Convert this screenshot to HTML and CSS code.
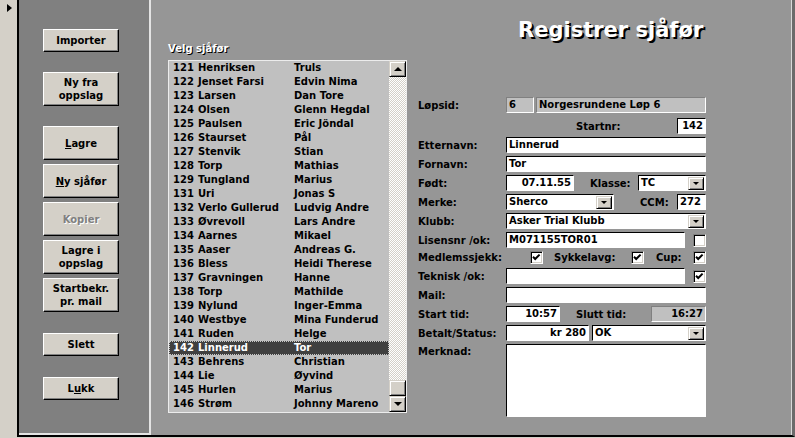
FILE: index.html
```html
<!DOCTYPE html>
<html lang="no">

<head>
  <meta charset="UTF-8" />
  <meta name="viewport" content="width=device-width, initial-scale=1.0" />
  <title>Registrer sjåfør</title>
  <link rel="stylesheet" href="styles.css">
</head>

<body>
  <div class="window">
    <!-- postvelger til venstre -->
    <div class="selector"><span class="current"></span></div>

    <div class="form">
      <div class="panel">
        <button class="btn">Importer</button>
        <button class="btn tall spaced">Ny fra<br>oppslag</button>
        <button class="btn tall spaced"><u>L</u>agre</button>
        <button class="btn tall"><u>N</u>y sjåfør</button>
        <button class="btn tall" disabled>Kopier</button>
        <button class="btn tall">Lagre i<br>oppslag</button>
        <button class="btn tall">Startbekr.<br>pr. mail</button>
        <button class="btn apart">Slett</button>
        <button class="btn apart">L<u>u</u>kk</button>
      </div>

      <div class="detail">
        <div class="picker">
          <div class="picker-label">Velg sjåfør</div>
          <div class="listbox">
            <ul class="rows" id="rows"></ul>
            <div class="vscroll">
              <span class="sb-btn"><i class="arrow up"></i></span>
              <span class="sb-track"></span>
              <span class="sb-btn"></span>
              <span class="sb-btn"><i class="arrow down"></i></span>
            </div>
          </div>
        </div>

        <div class="record">
          <h1 class="title">Registrer sjåfør</h1>

          <div class="row first">
            <span class="lbl">Løpsid:</span>
            <span class="field grey race-id">6</span>
            <span class="field grey race-name">Norgesrundene Løp 6</span>
          </div>
          <div class="row start">
            <span class="lbl startnr-lbl">Startnr:</span>
            <span class="field num small">142</span>
          </div>
          <div class="row">
            <span class="lbl">Etternavn:</span>
            <span class="field wide">Linnerud</span>
          </div>
          <div class="row">
            <span class="lbl">Fornavn:</span>
            <span class="field wide">Tor</span>
          </div>
          <div class="row">
            <span class="lbl">Født:</span>
            <span class="field num born">07.11.55</span>
            <span class="lbl class-lbl">Klasse:</span>
            <span class="field combo class-box">TC<i class="drop"></i></span>
          </div>
          <div class="row">
            <span class="lbl">Merke:</span>
            <span class="field combo brand">Sherco<i class="drop"></i></span>
            <span class="lbl ccm-lbl">CCM:</span>
            <span class="field small">272</span>
          </div>
          <div class="row">
            <span class="lbl">Klubb:</span>
            <span class="field combo wide">Asker Trial Klubb<i class="drop"></i></span>
          </div>
          <div class="row">
            <span class="lbl">Lisensnr /ok:</span>
            <span class="field licence">M071155TOR01</span>
            <span class="check end"></span>
          </div>
          <div class="row checks">
            <span class="lbl member-lbl">Medlemssjekk:</span>
            <span class="check on"></span>
            <span class="lbl fee-lbl">Sykkelavg:</span>
            <span class="check on"></span>
            <span class="lbl cup-lbl">Cup:</span>
            <span class="check on"></span>
          </div>
          <div class="row">
            <span class="lbl">Teknisk /ok:</span>
            <span class="field licence"></span>
            <span class="check end on"></span>
          </div>
          <div class="row">
            <span class="lbl">Mail:</span>
            <span class="field wide"></span>
          </div>
          <div class="row">
            <span class="lbl">Start tid:</span>
            <span class="field num time">10:57</span>
            <span class="lbl end-lbl">Slutt tid:</span>
            <span class="field grey num end-time">16:27</span>
          </div>
          <div class="row">
            <span class="lbl">Betalt/Status:</span>
            <span class="field num paid">kr 280</span>
            <span class="field combo status">OK<i class="drop"></i></span>
          </div>
          <div class="row memo-row">
            <span class="lbl">Merknad:</span>
            <span class="field memo"></span>
          </div>
        </div>
      </div>
    </div>
  </div>

  <script>
    const drivers = [
      [121, 'Henriksen', 'Truls'],
      [122, 'Jenset Farsi', 'Edvin Nima'],
      [123, 'Larsen', 'Dan Tore'],
      [124, 'Olsen', 'Glenn Hegdal'],
      [125, 'Paulsen', 'Eric Jöndal'],
      [126, 'Staurset', 'Pål'],
      [127, 'Stenvik', 'Stian'],
      [128, 'Torp', 'Mathias'],
      [129, 'Tungland', 'Marius'],
      [131, 'Uri', 'Jonas S'],
      [132, 'Verlo Gullerud', 'Ludvig Andre'],
      [133, 'Øvrevoll', 'Lars Andre'],
      [134, 'Aarnes', 'Mikael'],
      [135, 'Aaser', 'Andreas G.'],
      [136, 'Bless', 'Heidi Therese'],
      [137, 'Gravningen', 'Hanne'],
      [138, 'Torp', 'Mathilde'],
      [139, 'Nylund', 'Inger-Emma'],
      [140, 'Westbye', 'Mina Funderud'],
      [141, 'Ruden', 'Helge'],
      [142, 'Linnerud', 'Tor'],
      [143, 'Behrens', 'Christian'],
      [144, 'Lie', 'Øyvind'],
      [145, 'Hurlen', 'Marius'],
      [146, 'Strøm', 'Johnny Mareno']
    ];

    const $rows = document.getElementById('rows');
    const $fragment = document.createDocumentFragment();

    for (const [nr, last, first] of drivers) {
      const $li = document.createElement('li');
      $li.className = nr === 142 ? 'item selected' : 'item';
      $li.innerHTML = `<span class="nr">${nr}</span><span class="last">${last}</span><span>${first}</span>`;
      $fragment.appendChild($li);
    }
    $rows.appendChild($fragment);

    // hakene tegnes som svg
    const tick = '<svg width="9" height="9" viewBox="0 0 9 9"><path d="M1 3.8 L3.2 6 L7.6 1.6" fill="none" stroke="#000" stroke-width="2"/></svg>';
    for (const $box of document.querySelectorAll('.check.on')) {
      $box.innerHTML = tick;
    }
  </script>
</body>

</html>
```

FILE: styles.css
```css
* {
  box-sizing: border-box;
}

body {
  margin: 0;
  background-color: #d4d0c8;
  font: bold 10px "DejaVu Sans", sans-serif;
  color: #000;
}

.window {
  display: flex;
  width: 795px;
  height: 438px;
}

.selector {
  width: 17px;
  flex: none;
}

.current {
  display: block;
  width: 0;
  height: 0;
  margin: 4px 0 0 7px;
  border-top: 4px solid transparent;
  border-bottom: 4px solid transparent;
  border-left: 5px solid #000;
}

.form {
  flex: 1;
  display: flex;
  height: 437px;
  border-left: 2px solid #000;
  border-bottom: 2px solid #000;
  border-right: 3px solid #6b6b6b;
}

/* knapper */
.panel {
  width: 132px;
  flex: none;
  display: flex;
  flex-direction: column;
  align-items: flex-start;
  padding: 29px 0 0 24px;
  background-color: #808080;
  border-right: 2px solid #e4e4e4;
  border-bottom: 2px solid #e4e4e4;
}

.btn {
  width: 76px;
  height: 23px;
  margin-top: 4px;
  padding: 0;
  background-color: #d4d0c8;
  border: 1px solid;
  border-color: #fff #000 #000 #fff;
  box-shadow: inset -1px -1px #808080;
  font: bold 10px/13px "DejaVu Sans", sans-serif;
  color: #000;
}

.btn:first-child {
  margin-top: 0;
}

.btn.tall {
  height: 34px;
}

.btn.spaced {
  margin-top: 20px;
}

.btn.apart {
  margin-top: 21px;
}

.btn:disabled {
  color: #808080;
  text-shadow: 1px 1px 0 #fff;
}

/* skjema */
.detail {
  flex: 1;
  display: flex;
  padding-left: 17px;
  background-color: #969696;
  border-right: 1px solid #d8d8d8;
}

.picker {
  width: 239px;
  flex: none;
  padding-top: 42px;
}

.picker-label {
  height: 13px;
  line-height: 13px;
  color: #fff;
  text-shadow: 1px 1px 0 #000;
}

.listbox {
  display: flex;
  height: 353px;
  margin-top: 5px;
  border: 1px solid #ececec;
  background-color: #c0c0c0;
}

.rows {
  flex: 1;
  margin: 0;
  padding: 0;
  list-style: none;
}

.item {
  display: flex;
  height: 14px;
  line-height: 14px;
  padding-left: 4px;
  white-space: nowrap;
}

.item .nr {
  width: 25px;
}

.item .last {
  width: 96px;
}

.item.selected {
  background-color: #404040;
  color: #fff;
  outline: 1px dotted #c8c8c8;
  outline-offset: -1px;
}

.vscroll {
  width: 17px;
  display: flex;
  flex-direction: column;
}

.sb-btn {
  display: flex;
  align-items: center;
  justify-content: center;
  height: 16px;
  background-color: #d4d0c8;
  border: 1px solid;
  border-color: #d4d0c8 #000 #000 #d4d0c8;
  box-shadow: inset 1px 1px #fff, inset -1px -1px #808080;
}

.sb-track {
  flex: 1;
  background: repeating-conic-gradient(#d4d0c8 0 25%, #fff 0 50%) 0 0 / 2px 2px;
}

.arrow {
  width: 0;
  height: 0;
  border-left: 4px solid transparent;
  border-right: 4px solid transparent;
}

.arrow.up {
  border-bottom: 4px solid #000;
}

.arrow.down {
  border-top: 4px solid #000;
}

.record {
  width: 288px;
  margin-left: 11px;
}

.title {
  margin: 18px 0 0 100px;
  font: bold 21px/25px "DejaVu Sans", sans-serif;
  color: #fff;
  text-shadow: 2px 2px 0 #000;
  white-space: nowrap;
}

.row {
  display: flex;
  align-items: center;
  height: 16px;
  margin-top: 3px;
}

.row.first {
  margin-top: 54px;
}

.row.start {
  margin-top: 5px;
}

.row.checks {
  margin-top: 1px;
}

.lbl {
  width: 88px;
  flex: none;
  white-space: nowrap;
}

.startnr-lbl {
  width: 101px;
  margin-left: 158px;
}

.class-lbl {
  width: 48px;
  margin-left: 16px;
}

.ccm-lbl {
  width: 37px;
  margin-left: 26px;
}

.member-lbl {
  width: 112px;
}

.fee-lbl {
  width: 77px;
  margin-left: 11px;
}

.cup-lbl {
  width: 37px;
  margin-left: 12px;
}

.end-lbl {
  width: 75px;
  margin-left: 16px;
}

.field {
  flex: none;
  height: 16px;
  padding: 0 2px;
  line-height: 14px;
  background-color: #fff;
  border: 1px solid;
  border-color: #000 #fff #fff #000;
  white-space: nowrap;
  overflow: hidden;
}

.field.grey {
  background-color: #c0c0c0;
  border-color: #808080 #fff #fff #808080;
}

.field.num {
  text-align: right;
}

.race-id {
  width: 28px;
}

.race-name {
  width: 170px;
  margin-left: 2px;
}

.small {
  width: 29px;
}

.wide {
  width: 200px;
}

.born {
  width: 68px;
}

.class-box {
  width: 68px;
}

.brand {
  width: 108px;
}

.licence {
  width: 179px;
}

.time {
  width: 54px;
}

.end-time {
  width: 55px;
}

.paid {
  width: 83px;
}

.status {
  width: 114px;
  margin-left: 3px;
}

.combo {
  display: flex;
  align-items: center;
  justify-content: space-between;
  padding-right: 1px;
}

.drop {
  display: flex;
  align-items: center;
  justify-content: center;
  width: 16px;
  height: 13px;
  background-color: #d4d0c8;
  border: 1px solid;
  border-color: #d4d0c8 #000 #000 #d4d0c8;
  box-shadow: inset 1px 1px #fff, inset -1px -1px #808080;
}

.drop::after {
  content: "";
  border-left: 3px solid transparent;
  border-right: 3px solid transparent;
  border-top: 3px solid #000;
}

.check {
  display: flex;
  align-items: center;
  justify-content: center;
  width: 13px;
  height: 13px;
  flex: none;
  background-color: #fff;
  border: 1px solid;
  border-color: #808080 #fff #fff #808080;
  box-shadow: inset 1px 1px #000, inset -1px -1px #d4d0c8;
}

.check.end {
  margin-left: 8px;
}

.row.memo-row {
  align-items: flex-start;
  height: 73px;
}

.memo-row .lbl {
  padding-top: 2px;
}

.memo {
  width: 200px;
  height: 73px;
}
```
